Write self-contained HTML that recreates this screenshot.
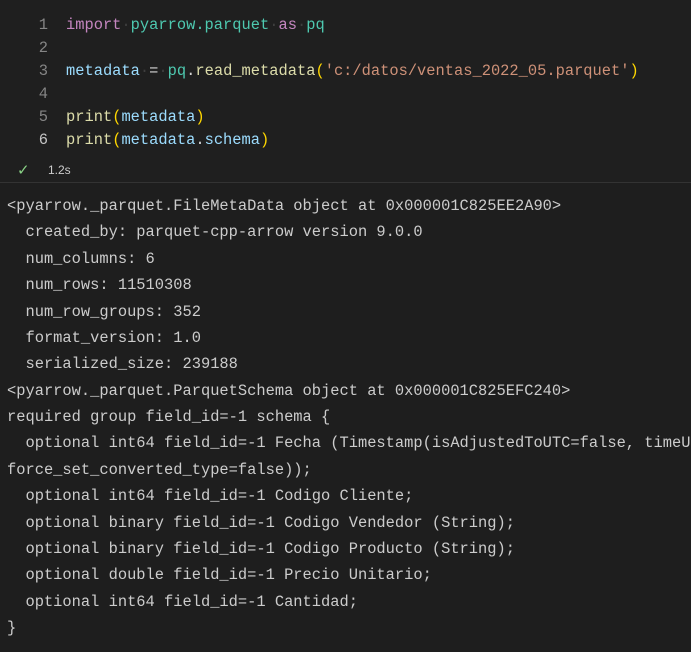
<!DOCTYPE html>
<html><head><meta charset="utf-8"><style>
body{margin:0;width:691px;height:652px;background:#1e1e1e;overflow:hidden;font-family:"Liberation Mono",monospace;position:relative;}
.top{position:absolute;left:0;top:0;width:691px;height:182px;background:#1f1f1f;}
.sep{position:absolute;left:0;top:182px;width:691px;height:1px;background:#333;}
.code{position:absolute;left:0;top:14px;font-size:15.4px;line-height:23px;white-space:pre;color:#d4d4d4;}
.ln{display:inline-block;width:48px;text-align:right;color:#858585;margin-right:18px;}
.ln.a{color:#c6c6c6}
.k{color:#c586c0}.m{color:#4ec9b0}.v{color:#9cdcfe}.f{color:#dcdcaa}.s{color:#ce9178}.p{color:#ffd700}.d{color:#3e3e3e}
.out{position:absolute;left:7px;top:193px;width:684px;overflow:hidden;font-size:15.4px;line-height:26.38px;white-space:pre;color:#cccccc;}
.st{position:absolute;left:17px;top:161px;color:#89d185;font-size:15px;font-family:"Liberation Sans",sans-serif;}
.tm{position:absolute;left:48px;top:163px;color:#ccc;font-size:12px;font-family:"Liberation Sans",sans-serif;}
</style></head><body>
<div class="top"></div><div class="sep"></div>
<div class="code"><span class="ln">1</span><span class="k">import</span><span class="d">·</span><span class="m">pyarrow.parquet</span><span class="d">·</span><span class="k">as</span><span class="d">·</span><span class="m">pq</span>
<span class="ln">2</span>
<span class="ln">3</span><span class="v">metadata</span><span class="d">·</span>=<span class="d">·</span><span class="m">pq</span>.<span class="f">read_metadata</span><span class="p">(</span><span class="s">'c:/datos/ventas_2022_05.parquet'</span><span class="p">)</span>
<span class="ln">4</span>
<span class="ln">5</span><span class="f">print</span><span class="p">(</span><span class="v">metadata</span><span class="p">)</span>
<span class="ln a">6</span><span class="f">print</span><span class="p">(</span><span class="v">metadata</span>.<span class="v">schema</span><span class="p">)</span></div>
<div class="st">✓</div><div class="tm">1.2s</div>
<div class="out">&lt;pyarrow._parquet.FileMetaData object at 0x000001C825EE2A90&gt;
  created_by: parquet-cpp-arrow version 9.0.0
  num_columns: 6
  num_rows: 11510308
  num_row_groups: 352
  format_version: 1.0
  serialized_size: 239188
&lt;pyarrow._parquet.ParquetSchema object at 0x000001C825EFC240&gt;
required group field_id=-1 schema {
  optional int64 field_id=-1 Fecha (Timestamp(isAdjustedToUTC=false, timeUnit=milliseconds, is_from_converted_type=false,
force_set_converted_type=false));
  optional int64 field_id=-1 Codigo Cliente;
  optional binary field_id=-1 Codigo Vendedor (String);
  optional binary field_id=-1 Codigo Producto (String);
  optional double field_id=-1 Precio Unitario;
  optional int64 field_id=-1 Cantidad;
}</div>
</body></html>
